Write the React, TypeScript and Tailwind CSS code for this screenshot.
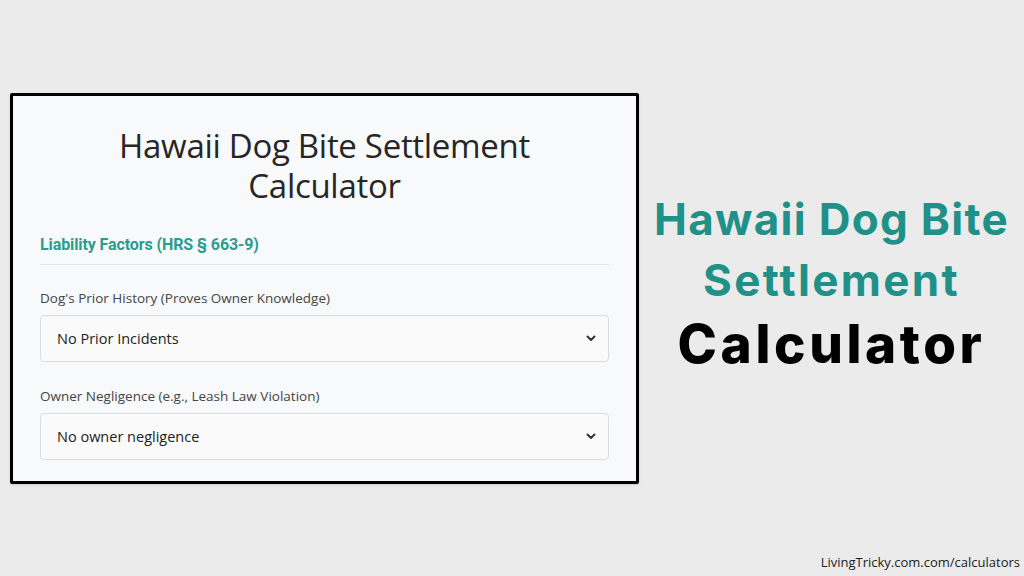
import React from "react";

function Field({ label, value, first }: { label: string; value: string; first?: boolean }) {
  return (
    <div className={first ? "mt-[24px]" : "mt-[25px]"}>
      <div className="text-[13.5px] leading-[18px] text-[#444] font-['Open_Sans',sans-serif]">{label}</div>
      <div className="mt-[8px] h-[47px] rounded-[4px] border border-[#dcdcdc] bg-[#fafafa] flex items-center justify-between pl-[16px] pr-[12px]">
        <span className="text-[14.5px] text-[#222] font-['Open_Sans',sans-serif]">{value}</span>
        <svg width="10" height="7" viewBox="0 0 10 7" className="text-[#333]">
          <path d="M1.5 1.5 L5 5 L8.5 1.5" fill="none" stroke="currentColor" strokeWidth="2" strokeLinecap="round" strokeLinejoin="round" />
        </svg>
      </div>
    </div>
  );
}

export default function App() {
  return (
    <div className="w-[1024px] h-[576px] bg-[#ebebeb] relative overflow-hidden flex">
      {/* Calculator card */}
      <div className="mt-[93px] ml-[10px] w-[629px] h-[391px] border-[3px] border-black rounded-[2px] bg-[#f8f9fa] px-[27px] shadow-sm">
        <h1 className="mt-[30px] text-center text-[33px] leading-[40px] font-medium text-[#262626] font-['Open_Sans',sans-serif] tracking-[-0.3px]">
          Hawaii Dog Bite Settlement
          <br />
          Calculator
        </h1>
        <div className="mt-[29px] pb-[9px] border-b border-[#dde8ec]">
          <h2 className="text-[16px] leading-[20px] font-bold text-[#2a9d8f] font-['Roboto',sans-serif] tracking-[-0.1px]">
            Liability Factors (HRS § 663-9)
          </h2>
        </div>
        <Field first label="Dog's Prior History (Proves Owner Knowledge)" value="No Prior Incidents" />
        <Field label="Owner Negligence (e.g., Leash Law Violation)" value="No owner negligence" />
      </div>

      {/* Headline */}
      <div className="flex-1 flex flex-col items-center mt-[188px] font-['Inter',sans-serif]">
        <div className="text-[44px] leading-[62px] font-bold text-[#1f9188] tracking-[1.3px]">Hawaii Dog Bite</div>
        <div className="text-[44px] leading-[60px] font-bold text-[#1f9188] tracking-[2.3px]">Settlement</div>
        <div className="text-[53px] leading-[68px] font-extrabold text-black tracking-[3.6px]">Calculator</div>
      </div>

      <div className="absolute right-[4px] bottom-[4px] text-[13px] text-[#222] font-['Open_Sans',sans-serif]">
        LivingTricky.com.com/calculators
      </div>
    </div>
  );
}
